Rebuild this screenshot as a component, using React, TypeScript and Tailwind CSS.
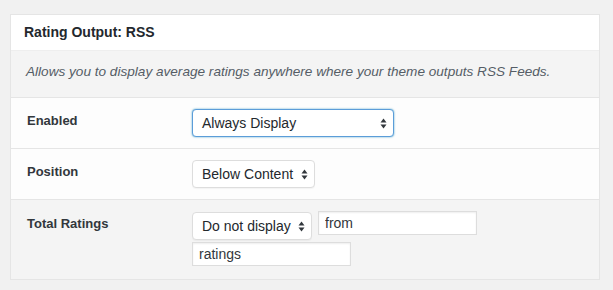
import type { ReactNode } from 'react';

function Arrows() {
  return (
    <svg width="7" height="11" viewBox="0 0 7 11" className="shrink-0 text-[#32373c]">
      <path d="M0.5 4.5 L3.5 0.5 L6.5 4.5 Z" fill="currentColor" />
      <path d="M0.5 6.5 L3.5 10.5 L6.5 6.5 Z" fill="currentColor" />
    </svg>
  );
}

function FakeSelect({ label, width, focused }: { label: string; width: string; focused?: boolean }) {
  return (
    <div
      className={`${width} h-[28px] flex items-center justify-between pl-[9px] pr-[6px] bg-white rounded-[4px] border text-[14px] text-[#23282d] ${
        focused
          ? 'border-[#5b9dd9] shadow-[0_0_2px_rgba(30,140,190,0.8)]'
          : 'border-[#dddddd] shadow-[0_1px_1px_rgba(0,0,0,0.04)]'
      }`}
    >
      <span className="whitespace-nowrap">{label}</span>
      <Arrows />
    </div>
  );
}

function TextBox({ value, className = '' }: { value: string; className?: string }) {
  return (
    <input
      readOnly
      value={value}
      className={`w-[159px] h-[24px] px-[6px] bg-white border border-[#dddddd] shadow-[inset_0_1px_2px_rgba(0,0,0,0.07)] text-[14px] text-[#32373c] outline-none ${className}`}
    />
  );
}

function Row({ label, children, gray, last }: { label: string; children: ReactNode; gray?: boolean; last?: boolean }) {
  return (
    <div
      className={`flex items-start ${gray ? 'bg-[#f4f4f4] pt-[12px] pb-[13px]' : 'bg-[#fdfdfd] py-[11px]'} ${
        last ? '' : 'border-b border-[#e5e5e5]'
      }`}
    >
      <div className="w-[181px] shrink-0 pl-[16px] text-[13px] font-bold leading-[24px] text-[#32373c]">{label}</div>
      <div>{children}</div>
    </div>
  );
}

export default function App() {
  return (
    <div className="min-h-screen bg-[#f1f1f1] pt-[14px] pl-[10px] font-['Liberation_Sans',Arial,sans-serif]">
      <div className="w-[590px] border border-[#e5e5e5] bg-white">
        {/* Header */}
        <div className="h-[36px] flex items-center pl-[13px] border-b border-[#eeeeee] text-[14px] font-bold text-[#23282d]">
          Rating Output: RSS
        </div>

        {/* Description */}
        <div className="h-[47px] pl-[15px] pt-[12px] bg-[#f4f4f4] border-b border-[#e5e5e5] text-[13.6px] italic leading-[18px] text-[#555d66]">
          Allows you to display average ratings anywhere where your theme outputs RSS Feeds.
        </div>

        <Row label="Enabled">
          <FakeSelect label="Always Display" width="w-[202px]" focused />
        </Row>

        <Row label="Position">
          <FakeSelect label="Below Content" width="w-[123px]" />
        </Row>

        <Row label="Total Ratings" gray last>
          <div className="flex items-start gap-[6px]">
            <FakeSelect label="Do not display" width="w-[120px]" />
            <TextBox value="from" className="-mt-px" />
          </div>
          <TextBox value="ratings" className="mt-[2px] w-[158px]" />
        </Row>
      </div>
    </div>
  );
}
